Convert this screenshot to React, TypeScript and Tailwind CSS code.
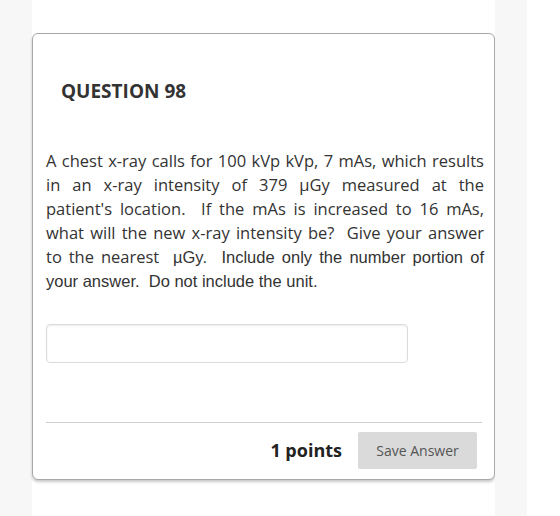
import React, {useState} from 'react';

const openSans = "font-['Open_Sans',sans-serif]";
const arial = "font-['Liberation_Sans',Arial,sans-serif]";

// a justified line that keeps its own break
const Line = ({children}: { children: React.ReactNode }) => (
    <div className="text-justify [text-align-last:justify]">{children}</div>
);

const App = () => {
    const [answer, setAnswer] = useState('');

    return (
        <div className="flex min-h-[516px] bg-white">
            <div className="w-8 shrink-0 bg-[#f7f7f7]"/>
            <div className="w-[463px] shrink-0 pt-[33px]">
                <div className="rounded-[6px] border border-[#a8a8a8] bg-white shadow-[0_2px_3px_rgba(0,0,0,0.22)]">
                    <h2 className={`${openSans} ml-[28px] mt-[44px] text-[19px] leading-[26px] font-bold text-[#333]`}>
                        QUESTION 98
                    </h2>

                    <div className={`${openSans} mt-[45px] ml-[13px] mr-[10px] text-[16.5px] leading-[24px] text-[#333]`}>
                        <Line>A chest x-ray calls for 100 kVp kVp, 7 mAs, which results</Line>
                        <Line>in an x-ray intensity of 379 µGy measured at the</Line>
                        <Line>patient's location.&nbsp; If the mAs is increased to 16 mAs,</Line>
                        <Line>what will the new x-ray intensity be?&nbsp; Give your answer</Line>
                        <Line>
                            to the nearest&nbsp; <span className={arial}>µGy.&nbsp; Include only the number portion of</span>
                        </Line>
                        <div className={arial}>your answer.&nbsp; Do not include the unit.</div>
                    </div>

                    <div className="ml-[13px] mt-[31px]">
                        <input
                            type="text"
                            value={answer}
                            onChange={(e) => setAnswer(e.target.value)}
                            className="h-[39px] w-[362px] rounded-[4px] border border-[#dcdcdc] bg-white px-2 shadow-[inset_0_1px_2px_rgba(0,0,0,0.08)] outline-none"
                        />
                    </div>

                    <div className="ml-[13px] mr-[12px] mt-[59px] border-t border-[#cfcfcf]"/>

                    <div className="flex items-center justify-end gap-4 pt-[9px] pb-[10px] pr-[17px]">
                        <span className={`${openSans} text-[18px] font-bold text-[#222]`}>1 points</span>
                        <button
                            type="button"
                            className={`${openSans} h-[37px] w-[119px] rounded-[2px] bg-[#dadada] text-[14px] text-[#555]`}
                        >
                            Save Answer
                        </button>
                    </div>
                </div>
            </div>
            <div className="w-8 shrink-0 bg-[#f7f7f7]"/>
            <div className="flex-1"/>
        </div>
    );
};

export default App;
